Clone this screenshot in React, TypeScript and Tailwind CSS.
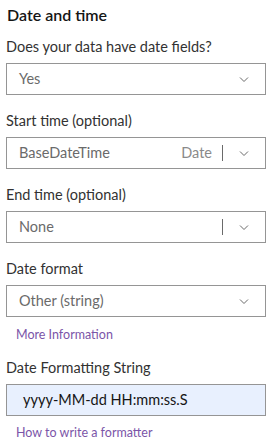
const font = { fontFamily: "Lato, 'Noto Sans', sans-serif" };

function Chevron() {
  return (
    <svg width="10" height="10" viewBox="0 0 10 10" className="shrink-0">
      <path d="M1 3.5l4 4 4-4" fill="none" stroke="#6a6a6a" strokeWidth="1" />
    </svg>
  );
}

function Select({ value, tag, divider }: { value: string; tag?: string; divider?: boolean }) {
  return (
    <div className="mt-1.5 flex h-8 items-center border border-[#959595] bg-white pl-3 pr-4 text-[14.5px] leading-5 text-[#6a6a6a]">
      <span className="flex-1">{value}</span>
      {tag && <span className="mr-2.5 text-[#8a8a8a]">{tag}</span>}
      {divider && <span className="mr-4 h-4 w-px bg-[#6a6a6a]" />}
      <Chevron />
    </div>
  );
}

function Label({ text, className }: { text: string; className?: string }) {
  return <div className={`text-[14.5px] leading-5 text-[#323232] ${className ?? ""}`}>{text}</div>;
}

export default function App() {
  return (
    <div className="flex h-[445px] w-[272px] flex-col bg-white px-1.5 pt-[3px]" style={font}>
      <div className="pl-px text-[16px] font-semibold leading-6 text-[#151515]">Date and time</div>

      <Label text="Does your data have date fields?" className="mt-2.5" />
      <Select value="Yes" />

      <Label text="Start time (optional)" className="mt-4" />
      <Select value="BaseDateTime" tag="Date" divider />

      <Label text="End time (optional)" className="mt-4" />
      <Select value="None" divider />

      <Label text="Date format" className="mt-4" />
      <Select value="Other (string)" />
      <a className="mt-2.5 pl-2.5 text-[12.5px] leading-4 text-[#7b55a8]">More Information</a>

      <Label text="Date Formatting String" className="mt-[15px]" />
      <div className="mt-1.5 flex h-8 items-center border border-[#959595] bg-[#e8f0fe] pl-4 text-[14.5px] leading-5 text-[#151515]">
        yyyy-MM-dd HH:mm:ss.S
      </div>
      <a className="mt-[9px] pl-2.5 text-[12.5px] leading-4 text-[#7b55a8]">How to write a formatter</a>
    </div>
  );
}
